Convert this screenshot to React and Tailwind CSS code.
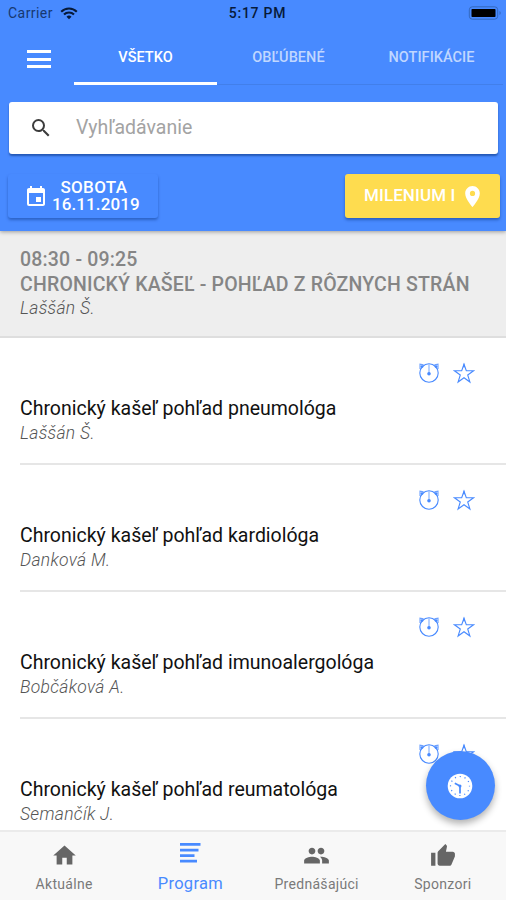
import React from 'react';
import { MdEvent, MdHome, MdPeople, MdPlace, MdSearch, MdThumbUp } from 'react-icons/md';

const talks = [
    { title: 'Chronický kašeľ pohľad pneumológa', speaker: 'Laššán Š.' },
    { title: 'Chronický kašeľ pohľad kardiológa', speaker: 'Danková M.' },
    { title: 'Chronický kašeľ pohľad imunoalergológa', speaker: 'Bobčáková A.' },
    { title: 'Chronický kašeľ pohľad reumatológa', speaker: 'Semančík J.' },
];

function WifiIcon() {
    return (
        <svg width="18" height="13" viewBox="0 0 18 13" fill="none" stroke="#071a3a" strokeWidth="2.1">
            <path d="M1.2 4.7a11 11 0 0 1 15.6 0" />
            <path d="M4 7.6a7 7 0 0 1 10 0" />
            <path d="M9 12.2 6.5 9.7a3.6 3.6 0 0 1 5 0z" fill="#071a3a" stroke="none" />
        </svg>
    );
}

function BatteryIcon() {
    return (
        <svg width="34" height="14" viewBox="0 0 34 14" fill="none">
            <rect x="1.3" y="0.8" width="28.4" height="12.4" rx="3" stroke="#3468bd" strokeWidth="1" />
            <rect x="3.5" y="3" width="24" height="8" rx="0.8" fill="#000" />
            <path d="M31.5 5v4c1.6-.5 1.6-3.5 0-4z" fill="#3468bd" />
        </svg>
    );
}

function AlarmIcon() {
    return (
        <svg width="22" height="22" viewBox="0 0 22 22" fill="none" stroke="#488aff" strokeWidth="1.1">
            <circle cx="11" cy="11" r="9.2" />
            <path d="M11 2.5V11" strokeOpacity="0.7" />
            <path d="M2 7V2.2l3.6.6M20 7V2.2l-3.6.6" strokeOpacity="0.8" />
            <circle cx="4" cy="4.6" r="1.4" fill="#488aff" stroke="none" />
            <circle cx="18" cy="4.6" r="1.4" fill="#488aff" stroke="none" />
            <circle cx="11" cy="11.8" r="1.8" fill="#488aff" stroke="none" />
        </svg>
    );
}

function StarIcon() {
    return (
        <svg width="22" height="22" viewBox="0 0 22 22" fill="none" stroke="#488aff" strokeWidth="1.1">
            <path d="M11 2.2 13.3 8.8H20.6L14.7 13 16.9 20 11 15.7 5.1 20 7.3 13 1.4 8.8H8.7z" />
            <path d="M11 1 12.2 5.2H9.8z" fill="#488aff" stroke="none" />
        </svg>
    );
}

function ClockIcon() {
    return (
        <svg width="26" height="26" viewBox="0 0 26 26" fill="none">
            <circle cx="13" cy="13" r="12.3" fill="#fff" />
            <circle cx="13" cy="13" r="9.5" stroke="#488aff" strokeWidth="1.2" strokeDasharray="1.2 3.774" strokeDashoffset="0.6" />
            <path d="M7.8 10.2 13 13V20.5" stroke="#488aff" strokeWidth="1.7" />
            <circle cx="13" cy="13" r="1.5" fill="#488aff" />
        </svg>
    );
}

function ListIcon() {
    return (
        <svg width="22" height="22" viewBox="0 0 22 22" fill="#488aff">
            <path d="M1 1h20.5v2.7H1zM1 6.8h18.5v2.7H1zM1 12.3h14.5v2.7H1zM1 17.7h17v2.7H1z" />
        </svg>
    );
}

function Talk({ talk }) {
    return (
        <li className="pl-5">
            <div className="h-[127px] border-b-2 border-[#e6e6e6] pt-[24px]">
                <div className="flex justify-end gap-[13px] pr-[31px]">
                    <AlarmIcon />
                    <StarIcon />
                </div>
                <h3 className="mt-[12px] text-[19.5px] leading-[25px] whitespace-nowrap text-[#111]">{talk.title}</h3>
                <p className="text-[17.5px] leading-[25px] font-light tracking-[0.3px] text-[#555] italic">{talk.speaker}</p>
            </div>
        </li>
    );
}

export default function App() {
    return (
        <div className="relative flex h-[900px] w-[506px] flex-col overflow-hidden bg-white font-['Roboto',sans-serif]">
            <header className="relative z-10 h-[231px] shrink-0 bg-[#488aff] shadow-[0_1px_4px_rgba(0,0,0,0.35)]">
                <div className="grid h-[26px] grid-cols-3 items-center pr-[4px] pl-2 text-[14px] text-[#071a3a]">
                    <div className="flex items-center gap-[7px] tracking-[0.45px] text-[#17386f]">
                        Carrier
                        <WifiIcon />
                    </div>
                    <span className="pl-[5px] text-center font-medium tracking-[0.75px]">5:17 PM</span>
                    <div className="flex justify-end">
                        <BatteryIcon />
                    </div>
                </div>

                <div className="flex h-[59px] pl-[27px]">
                    <button className="mt-[24px] flex h-[18px] w-[24px] flex-col justify-between">
                        <span className="h-[3px] w-full bg-white"></span>
                        <span className="h-[3px] w-full bg-white"></span>
                        <span className="h-[3px] w-full bg-white"></span>
                    </button>
                    <nav className="mr-[3px] ml-[23px] grid flex-1 grid-cols-3 border-b border-[#427fea] text-[14.5px] font-medium tracking-[0.05px] text-[#c0d7ff]">
                        <a className="-mb-px flex items-center justify-center border-b-[3px] border-white pt-[8px] text-white">VŠETKO</a>
                        <a className="flex items-center justify-center pt-[6px]">OBĽÚBENÉ</a>
                        <a className="flex items-center justify-center pt-[6px]">NOTIFIKÁCIE</a>
                    </nav>
                </div>

                <div className="mt-[17px] mr-2 ml-[9px] flex h-[52px] items-center rounded-[3px] bg-white pl-[20px] shadow-[0_2px_2px_rgba(0,40,110,0.5)]">
                    <MdSearch size={24} className="text-[#3c3c3c]" />
                    <span className="ml-[23px] text-[19.5px] text-[#a3a3a3]">Vyhľadávanie</span>
                </div>

                <div className="mt-[20px] flex justify-between pr-[6px] pl-2 font-medium text-white">
                    <button className="flex h-[44px] w-[150px] items-center gap-[4px] rounded-[3px] bg-[#488aff] pl-[16px] shadow-[0_2px_3px_rgba(0,40,110,0.4)]">
                        <MdEvent size={24} className="mt-px" />
                        <span className="flex flex-col pb-px text-[17px] leading-[17px] whitespace-nowrap">
                            <span className="pr-[4px] tracking-[0.3px]">SOBOTA</span>
                            <span className="tracking-[0.1px]">16.11.2019</span>
                        </span>
                    </button>
                    <button className="flex h-[44px] w-[155px] items-center gap-[5px] rounded-[3px] bg-[#fedc4f] pl-[19px] text-[17px] shadow-[0_2px_3px_rgba(0,40,110,0.45)]">
                        <span className="tracking-[0.1px] whitespace-nowrap">MILENIUM I</span>
                        <MdPlace size={25} className="shrink-0" />
                    </button>
                </div>
            </header>

            <section className="h-[107px] shrink-0 border-b-2 border-[#dedede] bg-[#eee] pt-[16px] pl-5">
                <h2 className="text-[19.5px] leading-[25px] font-medium tracking-[0.18px] whitespace-nowrap text-[#858585]">
                    08:30 - 09:25<br />CHRONICKÝ KAŠEĽ - POHĽAD Z RÔZNYCH STRÁN
                </h2>
                <p className="text-[17.5px] leading-[22px] font-light tracking-[0.3px] text-[#555] italic">Laššán Š.</p>
            </section>

            <ul className="min-h-0 flex-1 overflow-hidden">
                {talks.map((talk) => (
                    <Talk key={talk.speaker} talk={talk} />
                ))}
            </ul>

            <button className="absolute top-[751px] left-[426px] flex h-[69px] w-[69px] items-center justify-center rounded-full bg-[#488aff] pr-[2px] shadow-[0_4px_7px_rgba(0,0,0,0.3)]">
                <ClockIcon />
            </button>

            <footer className="grid h-[70px] shrink-0 grid-cols-4 border-t-2 border-[#ebebeb] bg-[#f8f8f8] pl-px text-[14px] text-[#7a7a7a]">
                <a className="flex flex-col items-center pt-[10px]">
                    <MdHome size={27} className="text-[#666]" />
                    <span className="mt-[5px] tracking-[0.3px]">Aktuálne</span>
                </a>
                <a className="flex flex-col items-center pt-[10px] text-[#488aff]">
                    <ListIcon />
                    <span className="mt-[8px] text-[16.5px] tracking-[0.3px]">Program</span>
                </a>
                <a className="flex flex-col items-center pt-[10px]">
                    <MdPeople size={27} className="text-[#666]" />
                    <span className="mt-[5px] tracking-[0.3px]">Prednášajúci</span>
                </a>
                <a className="flex flex-col items-center pt-[11px]">
                    <MdThumbUp size={26} className="text-[#666]" />
                    <span className="mt-[5px] tracking-[0.3px]">Sponzori</span>
                </a>
            </footer>
        </div>
    );
}
